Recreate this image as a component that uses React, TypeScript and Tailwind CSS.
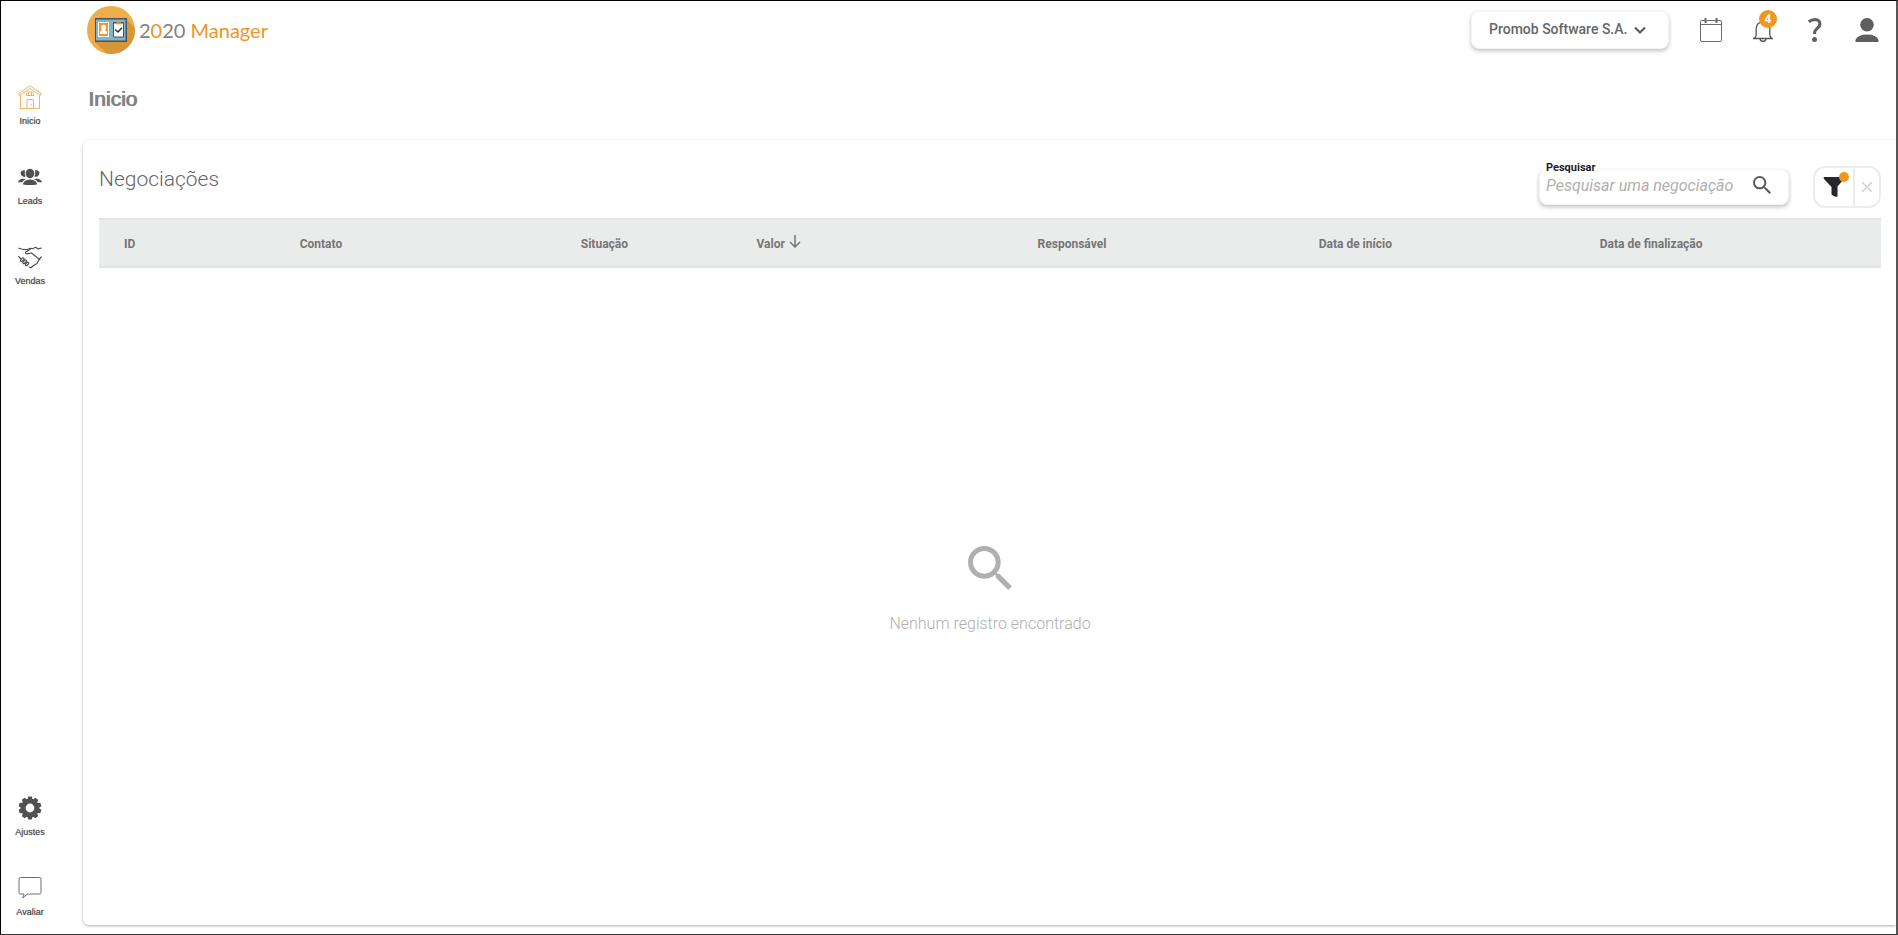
import React from "react";

type IconProps = { className?: string };

function LogoMark() {
  return (
    <svg width="48" height="48" viewBox="0 0 48 48" aria-hidden="true">
      <defs>
        <clipPath id="logo-circle">
          <circle cx="24" cy="24" r="24" />
        </clipPath>
      </defs>
      <circle cx="24" cy="24" r="24" fill="#f0ad4b" />
      <path d="M8 36L39 13L60 34V60H32Z" fill="#d99637" clipPath="url(#logo-circle)" />
      <rect x="8" y="12" width="32" height="24" fill="#4b5163" />
      <rect x="9" y="13.500" width="29.500" height="21" fill="#7fb5c8" />
      <rect x="11" y="16" width="11" height="15" fill="#fff" />
      <rect x="12" y="17" width="9" height="13" fill="#ee9a2b" />
      <path d="M13 28V25.500L15 24.500Q13.300 21.800 14.200 19.500Q16.500 17.800 18.800 19.500Q19.700 21.800 18 24.500L20 25.500V28Z" fill="#fff" />
      <rect x="26" y="16" width="11" height="15.500" rx="1" fill="#4b5163" />
      <rect x="27" y="17.500" width="9" height="13" fill="#fff" />
      <rect x="29" y="16.300" width="5" height="2" fill="#ee9a2b" />
      <path d="M28.300 23.500L31 26L35 21.800" fill="none" stroke="#333" strokeWidth="1.600" />
    </svg>
  );
}

function HouseIcon() {
  return (
    <svg width="24" height="24" viewBox="0 0 24 24" fill="none" stroke="#ecb467" strokeWidth="1" aria-hidden="true">
      <path d="M1.500 10.500L.6 8.600L12 .8L23.400 8.600L22.500 10.500L12 3.500Z" />
      <path d="M2.500 10V23.500H21.500V10M9 23V14.500H15.500V23M13.500 19V20" />
      <path d="M9.500 7H14.500L15.500 8.500V10.500H8.500V8.500ZM10.500 7V10.500M13.500 7V10.500" />
    </svg>
  );
}

function PeopleIcon() {
  return (
    <svg width="24" height="24" viewBox="0 0 24 24" fill="#4f5153" aria-hidden="true">
      <ellipse cx="12" cy="8.500" rx="4.300" ry="4.800" />
      <path d="M7 5.300Q6.300 8.700 7.600 11.600Q6.200 12.400 4.800 11.600Q2.300 10 2.500 7.500Q3.200 4.800 7 5.300Z" />
      <path d="M17 5.300Q17.700 8.700 16.400 11.600Q17.800 12.400 19.200 11.600Q21.700 10 21.500 7.500Q20.800 4.800 17 5.300Z" />
      <path d="M5 19.500Q5 16.500 8.500 15.200Q12 13.800 15.500 15.200Q19 16.500 19 19.500Q12 20.500 5 19.500Z" />
      <path d="M0 17.300Q.5 14.500 4.500 13.800Q6.500 13.500 8 14Q5 15.300 4.200 17.300ZM24 17.300Q23.500 14.500 19.500 13.800Q17.500 13.500 16 14Q19 15.300 19.800 17.300Z" />
    </svg>
  );
}

function HandshakeIcon() {
  return (
    <svg width="24" height="24" viewBox="0 0 24 24" fill="none" stroke="#4f5153" strokeWidth="1.200" strokeLinecap="round" strokeLinejoin="round" aria-hidden="true">
      <path d="M.8 3.200Q5 4.800 9.500 4.500L12.500 3.200L14.500 3.800L17.500 2.300L20 3.800L23 3.200" />
      <path d="M12.500 4L7.500 7.200Q7.200 9.200 9.500 8.800L13.500 8L21.500 14.500" />
      <path d="M23.300 12L21 14.500L19 18.500L15.500 20.500L13 22.800L11 22" />
      <path d="M.8 11.500L2.800 13.800" />
      <path d="M2.500 15.200L4.500 12.900Q6.400 12.500 6 14.400L4 16.400Q2.200 17 2.500 15.200ZM5 17.300L6.800 15Q8.700 14.600 8.300 16.500L6.500 18.500Q4.700 19.100 5 17.300ZM7.500 19.300L9.200 17.200Q11 16.800 10.700 18.600L9 20.500Q7.200 21 7.500 19.300Z" />
    </svg>
  );
}

function GearIcon() {
  const teeth = [0, 36, 72, 108, 144, 180, 216, 252, 288, 324];
  return (
    <svg width="24" height="24" viewBox="0 0 24 24" aria-hidden="true">
      <g fill="#4f5153">
        {teeth.map((angle) => (
          <path key={angle} d="M9.300 4L10.200 .6H13.800L14.700 4Z" transform={`rotate(${angle} 12 12)`} />
        ))}
      </g>
      <circle cx="12" cy="12" r="6.900" fill="none" stroke="#4f5153" strokeWidth="5" />
    </svg>
  );
}

function ChatIcon() {
  return (
    <svg width="24" height="24" viewBox="0 0 24 24" fill="none" stroke="#6b6d6f" strokeWidth="1" aria-hidden="true">
      <path d="M2.500 1.500H21.500Q23 1.500 23 3V16.500Q23 18 21.500 18H9.500L4.500 22Q6 20 6 18H2.500Q1 18 1 16.500V3Q1 1.500 2.500 1.500Z" />
    </svg>
  );
}

function CalendarIcon() {
  return (
    <svg width="24" height="24" viewBox="0 0 24 24" fill="none" stroke="#6b6b6b" strokeWidth="1" aria-hidden="true">
      <rect x="1.500" y="2.500" width="21" height="21" rx="1.500" />
      <path d="M1.500 6.500H22.500" />
      <path d="M6.500 0V5M17.500 0V5" strokeWidth="2" />
    </svg>
  );
}

function BellIcon() {
  return (
    <svg width="24" height="24" viewBox="0 0 24 24" fill="none" stroke="#555" strokeWidth="1.300" aria-hidden="true">
      <path d="M2 20.500H22M3.500 20.500Q5.200 18.500 5.200 16V10Q5.600 4.500 12 3.800Q18.400 4.500 18.800 10V16Q18.800 18.500 20.500 20.500" />
      <path d="M9 21Q9.500 23.300 12 23.300T15 21" />
    </svg>
  );
}

function HelpIcon() {
  return (
    <svg width="24" height="24" viewBox="0 0 24 24" fill="none" stroke="#5f5f5f" strokeWidth="3" aria-hidden="true">
      <path d="M5.700 3.700Q8.500 1.500 12 1.500Q16.900 1.700 16.900 6Q16.900 8.500 13.500 11Q11.500 12.800 11.500 16" />
      <circle cx="11.500" cy="21.500" r="2.500" fill="#5f5f5f" stroke="none" />
    </svg>
  );
}

function UserIcon() {
  return (
    <svg width="24" height="24" viewBox="0 0 24 24" fill="#5f5f5f" aria-hidden="true">
      <circle cx="12" cy="6.800" r="6.800" />
      <path d="M.5 24V22Q2.500 16.500 12 16.500T23.500 22V24Z" />
    </svg>
  );
}

function SearchIcon({ className }: IconProps) {
  return (
    <svg className={className} viewBox="3 3 17.500 17.500" fill="currentColor" aria-hidden="true">
      <path d="M15.500 14h-.79l-.28-.27A6.471 6.471 0 0 0 16 9.500 6.500 6.500 0 1 0 9.500 16c1.610 0 3.090-.59 4.230-1.570l.27.28v.79l5 4.990L20.490 19l-4.990-5zm-6 0C7.010 14 5 11.990 5 9.500S7.010 5 9.500 5 14 7.010 14 9.500 11.990 14 9.500 14z" />
    </svg>
  );
}

function FilterIcon() {
  return (
    <svg width="22" height="22" viewBox="0 0 22 22" fill="#26262c" aria-hidden="true">
      <path d="M1 1H21Q22 1.800 21 3L14.500 10.500V20.500Q12 21.500 8.500 18.500V11L1 3Q0 1.800 1 1Z" />
    </svg>
  );
}

const mainLinks = [
  { label: "Inicio", icon: <HouseIcon /> },
  { label: "Leads", icon: <PeopleIcon /> },
  { label: "Vendas", icon: <HandshakeIcon /> },
];

const footerLinks = [
  { label: "Ajustes", icon: <GearIcon /> },
  { label: "Avaliar", icon: <ChatIcon /> },
];

const columns = [
  { label: "ID", width: "w-[10%]" },
  { label: "Contato", width: "w-[16%]" },
  { label: "Situação", width: "w-[10%]" },
  { label: "Valor", width: "w-[16%]", sorted: true },
  { label: "Responsável", width: "w-[16%]" },
  { label: "Data de início", width: "w-[16%]" },
  { label: "Data de finalização", width: "w-[16%]" },
];

function SideLink({ label, icon }: { label: string; icon: React.ReactNode }) {
  return (
    <a href="#" className="flex h-14 flex-col items-center gap-1 text-[9px] leading-4 text-[#444] text-shadow-[0_0_1px_#999]">
      {icon}
      <span>{label}</span>
    </a>
  );
}

function Sidebar() {
  return (
    <nav className="flex w-[58px] shrink-0 flex-col justify-between pt-[26px] pb-0.5 font-['Liberation_Sans',sans-serif]">
      <div className="flex flex-col gap-6">
        {mainLinks.map((link) => (
          <SideLink key={link.label} {...link} />
        ))}
      </div>
      <div className="flex flex-col gap-6">
        {footerLinks.map((link) => (
          <SideLink key={link.label} {...link} />
        ))}
      </div>
    </nav>
  );
}

function Header() {
  return (
    <header className="flex h-[58px] items-center justify-between pr-[17px] pl-[86px]">
      <a href="#" className="flex items-center gap-1 font-[Lato,sans-serif] text-[20px] text-[#ee9526]">
        <LogoMark />
        <span>
          <span className="text-[#808285]">2</span>0<span className="text-[#808285]">20</span> Manager
        </span>
      </a>

      <div className="flex items-center">
        <div className="relative mr-[30px] rounded-lg border border-gray-100 bg-white shadow-[0_2px_4px_rgba(0,0,0,0.25)]">
          <select
            aria-label="Empresa"
            className="h-9 cursor-pointer appearance-none rounded-lg bg-white pr-10 pb-0.5 pl-[17px] text-[14px] font-medium text-[#666]"
          >
            <option>Promob Software S.A.</option>
          </select>
          <svg className="pointer-events-none absolute top-3.5 right-[22px]" width="12" height="9" viewBox="0 0 12 9" fill="none" stroke="#555" strokeWidth="2" aria-hidden="true">
            <path d="M1 1.500L6 6.500L11 1.500" />
          </svg>
        </div>
        <div className="flex items-center gap-7">
          <button type="button" aria-label="Agenda">
            <CalendarIcon />
          </button>
          <button type="button" aria-label="Notificações" className="relative">
            <BellIcon />
            <span className="absolute -top-2 right-0 -mr-0.5 flex size-[18px] items-center justify-center rounded-full bg-[#f3961f] text-[12px] font-bold text-white">
              4
            </span>
          </button>
          <button type="button" aria-label="Ajuda">
            <HelpIcon />
          </button>
          <button type="button" aria-label="Perfil">
            <UserIcon />
          </button>
        </div>
      </div>
    </header>
  );
}

function SearchBox() {
  return (
    <div className="relative flex h-9 w-[250px] items-center rounded-lg border border-gray-100 bg-white shadow-[0_2px_4px_rgba(0,0,0,0.25)]">
      <label htmlFor="search" className="absolute -top-2 left-1 bg-white px-0.5 text-[11px] leading-3 font-bold text-[#222]">
        Pesquisar
      </label>
      <input
        id="search"
        type="text"
        placeholder="Pesquisar uma negociação"
        className="h-full min-w-0 flex-1 rounded-lg pb-1 pl-1.5 text-[16px] italic outline-none placeholder:text-[#b0b0b0]"
      />
      <button type="button" aria-label="Buscar" className="mr-[17px] pb-1 text-[#5a5a5a]">
        <SearchIcon className="size-[18px]" />
      </button>
    </div>
  );
}

function Deals() {
  return (
    <section className="flex flex-1 flex-col rounded-l-md bg-white pr-[15px] pl-4 shadow-[0_1px_3px_rgba(0,0,0,0.3)]">
      <div className="flex h-[78px] items-center justify-between">
        <h2 className="pt-0.5 text-[21px] font-light text-[#666]">Negociações</h2>
        <div className="flex items-center gap-6 pt-4">
          <SearchBox />
          <div className="flex h-[42px] rounded-xl border-2 border-[#ececec]">
            <button type="button" aria-label="Filtrar" className="relative flex w-10 items-center justify-center border-r-2 border-[#ececec]">
              <FilterIcon />
              <span className="absolute top-1 right-1 size-2.5 rounded-full bg-[#f3961f]" />
            </button>
            <button type="button" aria-label="Limpar filtro" className="flex w-6 items-center justify-center">
              <svg width="12" height="12" viewBox="0 0 12 12" stroke="#d0d0d0" strokeWidth="1.500" aria-hidden="true">
                <path d="M1 1L11 11M11 1L1 11" />
              </svg>
            </button>
          </div>
        </div>
      </div>

      <div className="border-y-2 border-[#e2e3e3] bg-[#eaeceb] pl-[25px]">
        <table className="w-full table-fixed text-left text-[12px] text-[#757575]">
          <thead>
            <tr className="h-[46px]">
              {columns.map((column) => (
                <th key={column.label} scope="col" className={`${column.width} pt-0.5 font-bold`}>
                  <span className="flex items-center gap-1">
                    {column.label}
                    {column.sorted && (
                      <svg className="mb-1" width="12" height="14" viewBox="0 0 12 14" fill="none" stroke="#757575" strokeWidth="1.500" aria-hidden="true">
                        <path d="M6 0V12M1 7L6 12L11 7" />
                      </svg>
                    )}
                  </span>
                </th>
              ))}
            </tr>
          </thead>
        </table>
      </div>

      <div className="flex flex-1 flex-col items-center justify-center pb-3 text-[#b0b0b0]">
        <SearchIcon className="mb-[22px] size-11" />
        <p className="text-[16px] font-light">Nenhum registro encontrado</p>
      </div>
    </section>
  );
}

export default function App() {
  return (
    <div className="flex min-h-screen flex-col border border-r-2 border-black border-r-[#555] border-b-[#333] bg-white font-[Roboto,sans-serif]">
      <Header />
      <div className="flex flex-1">
        <Sidebar />
        <main className="flex min-w-0 flex-1 flex-col overflow-hidden pb-[9px] pl-6">
          <h1 className="flex h-[81px] items-center pb-0.5 pl-[5px] font-['Liberation_Sans',sans-serif] text-[21px] text-[#808285] text-shadow-[1px_0_0_#808285]">
            Inicio
          </h1>
          <Deals />
        </main>
      </div>
    </div>
  );
}
